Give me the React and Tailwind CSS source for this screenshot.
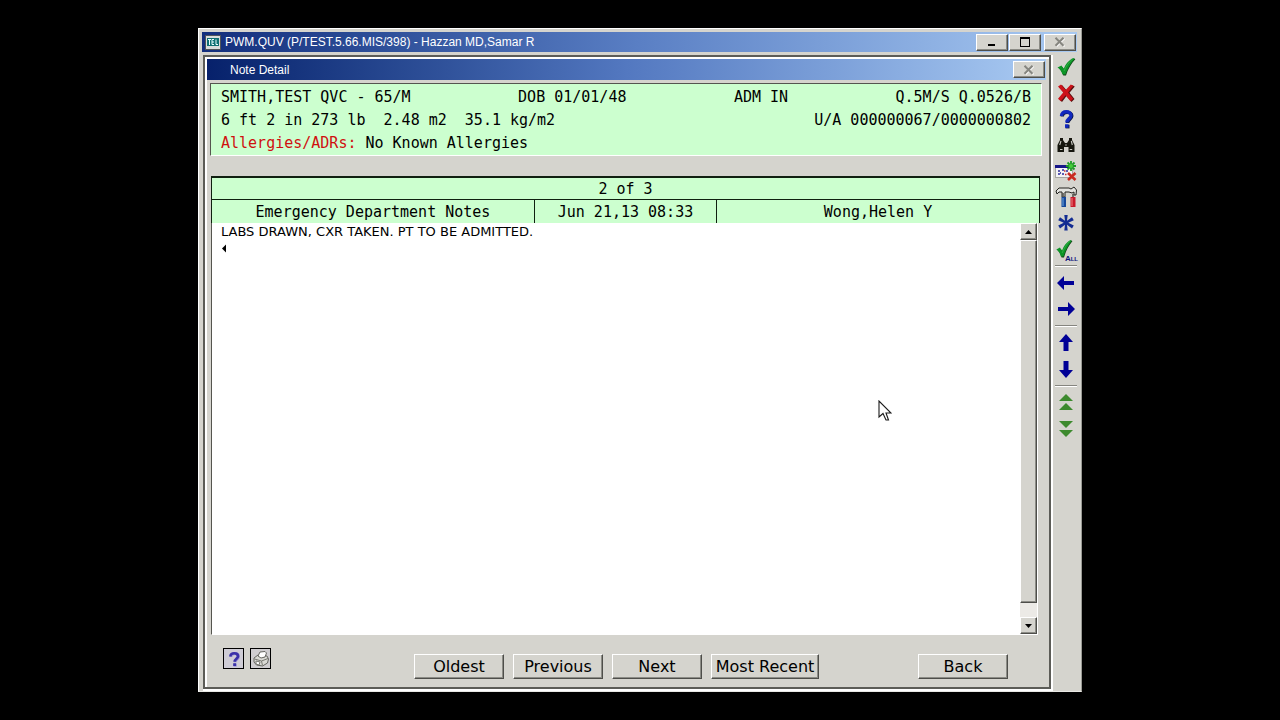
import React from "react";

const RAISED =
  "border border-t-white border-l-white border-r-[#4e4e4a] border-b-[#4e4e4a] bg-[#d5d4ce] shadow-[inset_-1px_-1px_0_#8c8c86]";

function CloseGlyph() {
  return (
    <svg width="12" height="10" viewBox="0 0 12 10" fill="none">
      <path d="M2.5 1.5l8 8M10.5 1.5l-8 8" stroke="#ffffff" strokeWidth="1.5" />
      <path d="M1.5 0.8l8 8M9.5 0.8l-8 8" stroke="#85857f" strokeWidth="2" />
    </svg>
  );
}

function CaptionButton({ label, disabled, children }) {
  return (
    <button
      type="button"
      aria-label={label}
      disabled={disabled}
      className={`flex h-[17px] w-8 items-center justify-center ${RAISED}`}
    >
      {children}
    </button>
  );
}

function Check({ small }) {
  return (
    <svg width="20" height="20" viewBox="0 0 20 20">
      <g transform={small ? "translate(-1 0) scale(.9 1)" : undefined}>
        <path d="M3 11.5L6.5 10l2.2 3.2C10.500 8.500 13.500 4 18.500 1.500l.8.8C15 7 12 12 10 18.500H7.300C6.300 15.500 5 13 3 11.500z" fill="#123c16" />
        <path d="M1.500 10.500L5.500 8.500l2.200 3.300C9.500 7.500 12.500 3 17.500 1l1 1C14.500 6.500 11.500 11.500 9.500 17.500H6.500C5.500 14 4 12 1.500 10.500z" fill="#0c9426" />
        <path d="M8 14C9.800 9.500 12.500 5.500 16.500 2.200" stroke="#3cb84c" strokeWidth="0.8" fill="none" />
      </g>
    </svg>
  );
}

function CheckAll() {
  return (
    <span className="relative block h-5 w-5">
      <Check small />
      <span className="absolute -right-[2px] -bottom-1 font-['Liberation_Sans'] text-[8px] leading-[8px] font-bold text-[#10107a]">
        A<span className="text-[6px]">LL</span>
      </span>
    </span>
  );
}

function Cross() {
  return (
    <svg width="20" height="20" viewBox="0 0 20 20">
      <path d="M3 4l3-2 4.500 5.200L15.500 2l3.300 1.500-5.300 6.300 5 6.200-3 3-5-6-4.500 6-3-3 5-6.200z" fill="#5a1010" />
      <path d="M2 3.500L5 1.500l4.700 5.500L14.800 1.500l2.700 1.300-5.500 6.700 5.200 6.300-2.700 2.500-5-6-4.700 6L2 15.800l5.200-6.300z" fill="#cc121a" />
    </svg>
  );
}

function Question({ small }) {
  return (
    <svg width={small ? 16 : 20} height={small ? 16 : 20} viewBox="0 0 20 20">
      <g fill="none" strokeWidth="3.400">
        <path d="M5.500 7C5.500 4 7.500 2.800 10.300 2.800s4.700 1.500 4.700 3.700c0 3-4.200 3.300-4.200 7" stroke={small ? "#9a94d8" : "#0b1544"} transform="translate(.8 .6)" />
        <path d="M5.500 7C5.500 4 7.500 2.800 10.300 2.800s4.700 1.500 4.700 3.700c0 3-4.200 3.300-4.200 7" stroke={small ? "#3a31a8" : "#1128bf"} />
      </g>
      <rect x="9.500" y="15.800" width="4" height="3.600" fill={small ? "#9a94d8" : "#0b1544"} />
      <rect x="9" y="15.300" width="3.600" height="3.500" fill={small ? "#3a31a8" : "#1128bf"} />
    </svg>
  );
}

function Binoculars() {
  return (
    <svg width="20" height="20" viewBox="0 0 20 20">
      <path d="M4 3h3v2l2 3h2l2-3V3h3v2l2.500 5v7h-6v-5H8v5H1.500v-7L4 5z" fill="#16160f" />
      <path d="M5 6L3.700 10M15.300 6l1 4M9.200 10h1.600M4 14.500h2.500M13.700 14.500h2.500" stroke="#c9c9c2" strokeWidth="1.100" fill="none" />
    </svg>
  );
}

function CalendarEdit() {
  return (
    <svg width="22" height="20" viewBox="0 0 22 20">
      <rect x="0.500" y="4.500" width="17" height="12" fill="#f3f3f5" stroke="#a6a6a2" />
      <rect x="0" y="4" width="15" height="3" fill="#17178a" />
      <path d="M3 10h2M7 9h2M11 10h2M3 13h2M7 13h2M5 12h1" stroke="#2a2a9a" strokeWidth="1.300" />
      <path d="M9 10h1.500M10 13.500h1.500" stroke="#c43030" strokeWidth="1.300" />
      <path d="M16 0v10M11 5h10M12.500 1.500l7 7M19.500 1.500l-7 7" stroke="#1d9a26" strokeWidth="1.800" />
      <circle cx="16" cy="5" r="2" fill="#46cb3c" />
      <path d="M13 12l7.500 7M20.500 12L13 19" stroke="#c92a20" strokeWidth="2.600" />
    </svg>
  );
}

function Tools() {
  return (
    <svg width="22" height="22" viewBox="0 0 22 22">
      <path d="M1 5l3-3h10l2 1 3-2 2.500 3-.5 5h-2V6l-2 1-3-1h-4v5H7V6H4L2 8z" fill="#e2e2de" stroke="#23231f" />
      <path d="M8 11v-4M18 12V8" stroke="#55554f" strokeWidth="1.600" />
      <rect x="6.500" y="11" width="4.500" height="10" fill="#17479a" />
      <path d="M8 12v8" stroke="#6fa8e0" />
      <rect x="15.500" y="11" width="5" height="10" fill="#c91a2c" />
      <path d="M17 12v8" stroke="#f08080" />
    </svg>
  );
}

function Asterisk() {
  return (
    <svg width="20" height="20" viewBox="0 0 20 20">
      <path d="M8.300 2h3.400L11 7.800l5-3.600 1.800 3L12.300 9.800l5.500 2.600-1.800 3-5-3.600.7 5.800H8.300L9 11.800l-5 3.600-1.800-3 5.500-2.600-5.500-2.600 1.800-3 5 3.600z" fill="#132c92" />
    </svg>
  );
}

function Arrow({ path }) {
  return (
    <svg width="20" height="20" viewBox="0 0 20 20">
      <path d={path} fill="#000096" />
    </svg>
  );
}

function DoubleTriangle({ paths }) {
  return (
    <svg width="20" height="20" viewBox="0 0 20 20">
      {paths.map((d) => (
        <path key={d} d={d} fill="#3d8a2e" />
      ))}
    </svg>
  );
}

function Printer() {
  return (
    <svg width="18" height="18" viewBox="0 0 18 18" strokeLinejoin="round">
      <path d="M2 8l4-3 9 1 1.500 3-1 4-5 3-6-1L2 12z" fill="#d9d9d4" stroke="#666661" />
      <path d="M6 6l2-4 5-.5 1.500 1.500-1.500 4-4 1z" fill="#ffffff" stroke="#666661" />
      <path d="M2.500 9l7 2 6.500-2.500M9.500 11l1 4.500" fill="none" stroke="#777771" />
      <path d="M4 11l4 1-1 3-3-1z" fill="#ffffff" stroke="#777771" />
    </svg>
  );
}

const TOOL_GROUPS = [
  [
    ["Accept", <Check />],
    ["Cancel", <Cross />],
    ["Help", <Question />],
    ["Find", <Binoculars />],
    ["Calendar", <CalendarEdit />],
    ["Tools", <Tools />],
    ["Special", <Asterisk />],
    ["Accept all", <CheckAll />],
  ],
  [
    ["Left", <Arrow path="M1 10l7-7v5h10v4H8v5z" />],
    ["Right", <Arrow path="M19 10l-7-7v5H2v4h10v5z" />],
  ],
  [
    ["Up", <Arrow path="M10 1l7 8H12.500v9h-5V9H3z" />],
    ["Down", <Arrow path="M10 19l7-8H12.500V2h-5v9H3z" />],
  ],
  [
    ["Page up", <DoubleTriangle paths={["M10 1l7 7H3z", "M10 10l7 7H3z"]} />],
    ["Page down", <DoubleTriangle paths={["M3 2h14l-7 7z", "M3 11h14l-7 7z"]} />],
  ],
];

function Toolbar() {
  return (
    <nav aria-label="Tools" className="flex w-7 shrink-0 flex-col pr-[2px] pl-1">
      {TOOL_GROUPS.map((group, index) => (
        <div
          key={index}
          className={`flex flex-col ${index ? "mt-[3px] border-t border-[#85857f] pt-1 shadow-[inset_0_1px_0_#ffffff]" : ""}`}
        >
          {group.map(([label, icon]) => (
            <button key={label} type="button" aria-label={label} className="flex h-[26px] items-center justify-center">
              {icon}
            </button>
          ))}
        </div>
      ))}
    </nav>
  );
}

function PatientHeader() {
  return (
    <section className="border border-t-[#55554f] border-r-white border-b-white border-l-[#55554f] bg-[#ccffcf] px-[10px] pt-[2px] font-['DejaVu_Sans_Mono',monospace] text-[15px] leading-[23px] whitespace-pre text-black">
      <div className="flex justify-between">
        <span>SMITH,TEST QVC - 65/M</span>
        <span>DOB 01/01/48</span>
        <span>ADM IN</span>
        <span>Q.5M/S Q.0526/B</span>
      </div>
      <div className="flex justify-between">
        <span>6 ft 2 in 273 lb  2.48 m2  35.1 kg/m2</span>
        <span>U/A 000000067/0000000802</span>
      </div>
      <div>
        <span className="text-[#d01010]">Allergies/ADRs:</span> No Known Allergies
      </div>
    </section>
  );
}

function NoteTable() {
  return (
    <div className="pr-[2px]">
      <table className="w-full table-fixed border-collapse bg-[#ccffcf] font-['DejaVu_Sans_Mono',monospace] text-[15px] text-black">
        <colgroup>
          <col className="w-[39%]" />
          <col className="w-[22%]" />
          <col className="w-[39%]" />
        </colgroup>
        <thead>
          <tr>
            <th colSpan={3} className="border border-t-2 border-[#102010] p-0 pt-px leading-5 font-normal">
              2 of 3
            </th>
          </tr>
        </thead>
        <tbody className="text-center leading-[21px]">
          <tr>
            <td className="border-x border-[#102010] p-0 pt-[2px]">Emergency Department Notes</td>
            <td className="border-x border-[#102010] p-0 pt-[2px]">Jun 21,13 08:33</td>
            <td className="border-x border-[#102010] p-0 pt-[2px]">Wong,Helen Y</td>
          </tr>
        </tbody>
      </table>
    </div>
  );
}

function ScrollBar() {
  return (
    <div className="flex w-[17px] shrink-0 flex-col bg-[#eceae6]">
      <button type="button" aria-label="Scroll up" className={`flex h-[17px] items-center justify-center ${RAISED}`}>
        <svg width="7" height="4" viewBox="0 0 7 4">
          <path d="M3.500 0L7 4H0z" fill="#000000" />
        </svg>
      </button>
      <div className={`grow ${RAISED}`} />
      <button type="button" aria-label="Scroll down" className={`mt-[14px] flex h-[17px] items-center justify-center ${RAISED}`}>
        <svg width="7" height="4" viewBox="0 0 7 4">
          <path d="M3.500 4L7 0H0z" fill="#000000" />
        </svg>
      </button>
    </div>
  );
}

function NoteBody() {
  return (
    <div className="relative mr-1 flex grow border-r border-b border-l border-r-white border-b-white border-l-[#55554f] bg-white">
      <div className="grow px-[9px] pt-px font-['DejaVu_Sans',sans-serif] text-[13px] leading-4 text-black">
        <p>LABS DRAWN, CXR TAKEN. PT TO BE ADMITTED.</p>
        <svg width="6" height="16" viewBox="0 0 6 16">
          <path d="M5 4.500v8L1 8.500z" fill="#000000" />
        </svg>
      </div>
      <ScrollBar />
      <svg className="absolute top-[177px] right-[145px]" width="14" height="22" viewBox="0 0 14 22">
        <path d="M1 1v16l4-3.500L8 20h2.500L8 13h5z" fill="#ffffff" stroke="#1a1a1a" strokeWidth="1.100" />
      </svg>
    </div>
  );
}

function NavButton({ wide, children }) {
  return (
    <button type="button" className={`h-[25px] whitespace-nowrap ${wide ? "w-[108px]" : "w-[90px]"} ${RAISED}`}>
      {children}
    </button>
  );
}

function Footer() {
  return (
    <footer className="flex h-[52px] shrink-0 items-start pt-[13px] pr-[41px] pl-4">
      <div className="flex gap-[6px]">
        <button type="button" aria-label="Help" className="flex h-[21px] w-[21px] items-center justify-center border border-black bg-[#cfcdd6]">
          <Question small />
        </button>
        <button type="button" aria-label="Print" className="flex h-[21px] w-[21px] items-center justify-center border border-black bg-[#cfcdd0]">
          <Printer />
        </button>
      </div>
      <div className="mt-[6px] ml-[143px] flex grow gap-[9px] font-['DejaVu_Sans',sans-serif] text-base leading-[22px] text-black">
        <NavButton>Oldest</NavButton>
        <NavButton>Previous</NavButton>
        <NavButton>Next</NavButton>
        <NavButton wide>Most Recent</NavButton>
        <div className="grow" />
        <NavButton>Back</NavButton>
      </div>
    </footer>
  );
}

export default function App() {
  return (
    <main className="flex h-screen justify-center bg-black py-7 font-['Liberation_Sans',sans-serif]">
      <div className="flex w-full max-w-[884px] flex-col border border-t-white border-r-[#9a9a94] border-b-[#e8e8e4] border-l-white bg-[#d5d4ce] p-[3px] pr-[2px] pb-[2px]">
        <header className="mr-[2px] flex h-5 shrink-0 items-center bg-gradient-to-r from-[#132e7c] via-[#5a7fc4] to-[#a9caf2] pr-px pl-[3px] text-[12px] text-white">
          <svg width="16" height="15" viewBox="0 0 16 15">
            <rect x="0.500" y="0.500" width="15" height="14" fill="#d9dcdc" stroke="#50545a" />
            <rect x="2" y="3" width="12" height="8" fill="#0e6f72" />
            <path d="M3 4.500h3M4.500 5v5M7 4.500v5M7 4.500h2M7 7h2M7 9.500h2M11 4.500v5h2" stroke="#e6ffff" fill="none" />
          </svg>
          <h1 className="ml-1 grow">PWM.QUV (P/TEST.5.66.MIS/398) - Hazzan MD,Samar R</h1>
          <div className="flex gap-px">
            <CaptionButton label="Minimize">
              <svg width="10" height="10" viewBox="0 0 10 10">
                <path d="M1 7h7v2H1z" fill="#000000" />
              </svg>
            </CaptionButton>
            <CaptionButton label="Maximize">
              <svg width="10" height="10" viewBox="0 0 10 10">
                <path d="M0 0h10v10H0zM1 2v7h8V2z" fillRule="evenodd" fill="#000000" />
              </svg>
            </CaptionButton>
            <div className="ml-[2px]">
              <CaptionButton label="Close" disabled>
                <CloseGlyph />
              </CaptionButton>
            </div>
          </div>
        </header>

        <div className="mt-[2px] flex grow pl-px">
          <div className="mt-px flex grow flex-col border-2 border-[#5c5c57] shadow-[1px_1px_0_1px_#ffffff]">
            <div className="flex grow flex-col border-t-2 border-l-2 border-white">
              <div className="mr-[3px] flex h-[21px] shrink-0 items-center bg-gradient-to-r from-[#07216b] via-[#5378c0] to-[#a9caf2] pr-px pl-[23px] text-[12px] text-white">
                <h2 className="grow">Note Detail</h2>
                <CaptionButton label="Close note" disabled>
                  <CloseGlyph />
                </CaptionButton>
              </div>
              <div className="mt-[3px] mr-[7px] ml-[3px] flex grow flex-col">
                <PatientHeader />
                <div className="mt-5 flex grow flex-col pl-px">
                  <NoteTable />
                  <NoteBody />
                </div>
              </div>
              <Footer />
            </div>
          </div>
          <Toolbar />
        </div>
      </div>
    </main>
  );
}
